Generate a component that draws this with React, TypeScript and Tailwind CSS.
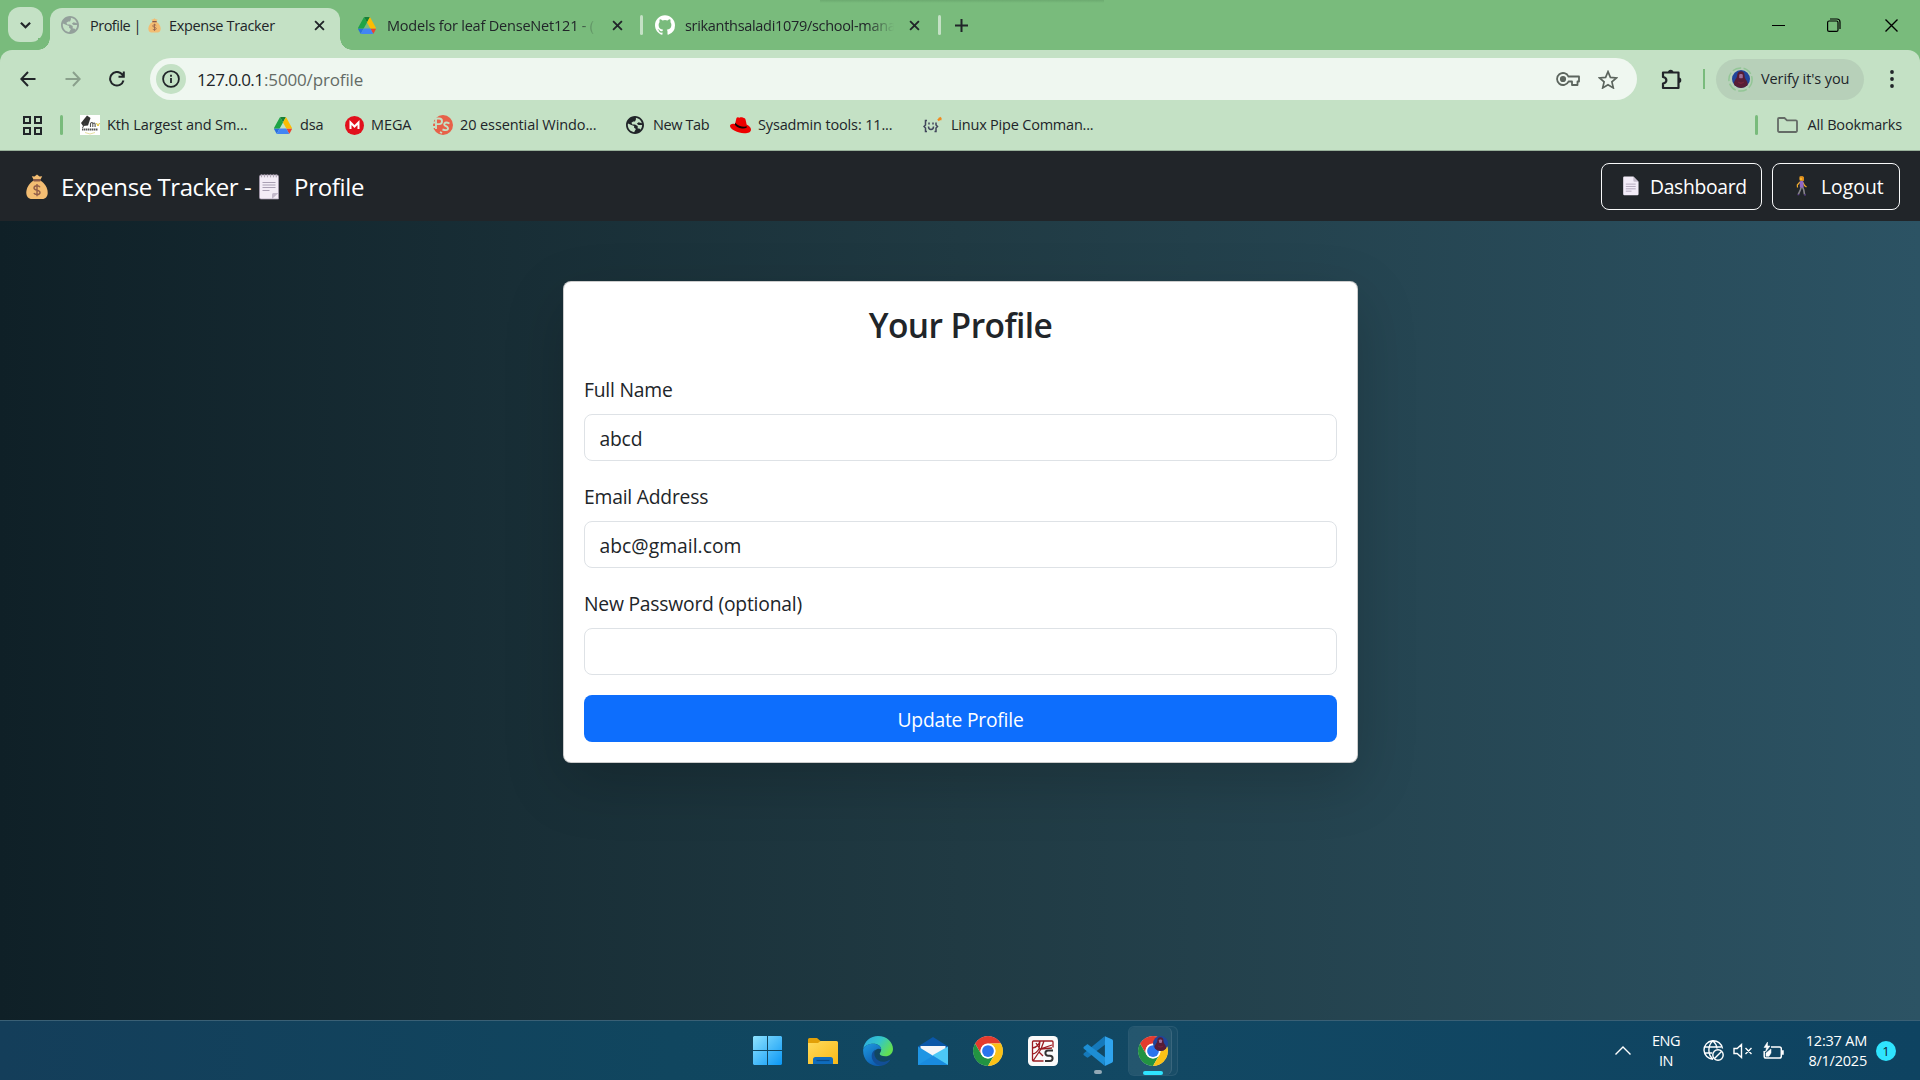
import React from 'react';

type P = { className?: string };

/* ---------- icons ---------- */
const Globe = ({ className }: P) => (
  <svg viewBox="2 2 20 20" className={className} fill="currentColor">
    <path d="M12 2C6.48 2 2 6.48 2 12s4.48 10 10 10 10-4.48 10-10S17.52 2 12 2zm-1 17.93c-3.95-.49-7-3.85-7-7.93 0-.62.08-1.21.21-1.79L8 12l3 1v2l2 1.500-2 3.430zM17.900 17.400c-.26-.81-1-1.400-1.900-1.400h-1v-3l-3-1.600h-3L8 9.500l2-1.500h2l1-2V4.070c3.500.500 5.800 3 6.600 5.900L16 9l-2 1.500 2 1.500h3.900c0 2-.8 4-2 5.400z" />
  </svg>
);
const Bag = ({ className }: P) => (
  <svg viewBox="0 0 22 26" className={className}>
    <path d="M7.500 6.500C3 9.500.3 14 .3 18.500.3 22.500 2.300 25 6 25h10c3.700 0 5.700-2.500 5.700-6.500 0-4.500-2.700-9-7.200-12z" fill="#f3bd72" />
    <path d="M7.500 5.500 5.800 2.200l2.700.4L11 .6l2.500 2 2.700-.4-1.700 3.300z" fill="#f3bd72" />
    <rect x="7" y="5.200" width="8" height="2.200" rx="1.100" fill="#8b5a48" />
    <path d="M14 13.200c-.5-1-1.600-1.500-3-1.500-1.800 0-3 .8-3 2.200 0 3 6 1.500 6 4.500 0 1.300-1.200 2.100-3 2.100-1.600 0-2.600-.5-3.100-1.500M11 10v12.200" fill="none" stroke="#925e49" strokeWidth="1.400" />
  </svg>
);
const Notes = ({ className }: P) => (
  <svg viewBox="0 0 20 27" className={className}>
    <path d="M2 2h16a1.500 1.500 0 0 1 1.500 1.500V26H2A1.500 1.500 0 0 1 .5 24.500v-21A1.500 1.500 0 0 1 2 2z" fill="#f3ecf6" stroke="#a79bb0" strokeWidth=".7" />
    <path d="M2.500 1.300v3M5.500 1.300v3M8.500 1.300v3M11.500 1.300v3M14.500 1.300v3M17.300 1.300v3" stroke="#9a929f" strokeWidth="1.200" strokeDasharray="1.200 .7" />
    <path d="M3.500 9.500h13M3.500 12h13M3.500 14.500h13M3.500 17.500h7" stroke="#aaa0b4" strokeWidth="1.200" />
    <path d="M13 26v-4.500a1.500 1.500 0 0 1 1.500-1.500h5z" fill="#c3b9cb" />
  </svg>
);
const Doc = ({ className }: P) => (
  <svg viewBox="0 0 17 20" className={className}>
    <path d="M1.500 0H11l5.500 5.500v13a1.300 1.300 0 0 1-1.300 1.300H1.500A1.300 1.300 0 0 1 .2 18.500v-17A1.300 1.300 0 0 1 1.500 0z" fill="#f3ecf8" />
    <path d="m11 0 5.500 5.500h-4.200A1.300 1.300 0 0 1 11 4.200z" fill="#c5bccc" />
    <path d="M3 8h10.500M3 10.500h10.500M3 13h10.500M3 15.500h6" stroke="#b2a8bb" strokeWidth="1" />
  </svg>
);
const Walker = ({ className }: P) => (
  <svg viewBox="0 0 12 20" className={className}>
    <path d="M5.300 11 4.300 14l-2 4.300M6.500 11l1.300 3 .7 4.300" stroke="#85838a" strokeWidth="1.600" fill="none" />
    <path d="M1.500 18.700h1.700M8 18.800h2" stroke="#5b3f86" strokeWidth="1.300" />
    <path d="M4 6 1.300 9l.2 2.500M7 6.500 8.500 9.500l2 1.500" stroke="#f2ad28" strokeWidth="1.200" fill="none" />
    <path d="M3.700 5.500c1-1 3-1 3.700 0l.2 6H3.900z" fill="#9068c8" />
    <path d="M3.500 1.500C3.700 0 7.500 0 7.700 1.500v3.200H4.300c-.8 0-1-1.200-.8-3.200z" fill="#fbb32d" />
    <path d="M3.500.5C5 0 7.500 0 7.900 1l.1 3.700-1.700-.2L6 2 3.500 1.500z" fill="#df8e1c" />
  </svg>
);
const Drive = ({ className }: P) => (
  <svg viewBox="0 0 87.3 78" className={className} preserveAspectRatio="none">
    <path d="m6.600 66.850 3.850 6.650c.8 1.400 1.950 2.500 3.300 3.300l13.750-23.800H0c0 1.550.4 3.100 1.200 4.500z" fill="#2a6fe0" />
    <path d="M43.650 25 29.900 1.200c-1.350.8-2.500 1.900-3.300 3.300L1.200 48.500A9 9 0 0 0 0 53h27.500z" fill="#1ea446" />
    <path d="M73.550 76.800c1.350-.8 2.500-1.900 3.300-3.300l1.600-2.750L86.100 57.500c.8-1.400 1.200-2.950 1.200-4.500H59.800l5.850 11.500z" fill="#ea4335" />
    <path d="M43.650 25 57.400 1.200C56.050.4 54.500 0 52.900 0H34.400c-1.600 0-3.150.45-4.500 1.200z" fill="#188038" />
    <path d="M59.800 53H27.500L13.750 76.800c1.350.8 2.900 1.200 4.500 1.200h50.800c1.600 0 3.150-.45 4.500-1.200z" fill="#4285f4" />
    <path d="m73.400 26.500-12.700-22c-.8-1.400-1.950-2.500-3.300-3.300L43.650 25 59.800 53h27.450c0-1.550-.4-3.100-1.200-4.500z" fill="#fbbc04" />
  </svg>
);
const Github = ({ className }: P) => (
  <svg viewBox="0 0 24 24" className={className} fill="currentColor">
    <path d="M12 .3C5.370.3 0 5.670 0 12.300c0 5.300 3.440 9.800 8.200 11.390.6.110.82-.26.82-.58v-2.040c-3.340.73-4.040-1.610-4.040-1.610-.55-1.390-1.330-1.760-1.330-1.760-1.090-.74.080-.73.080-.73 1.200.09 1.840 1.240 1.840 1.240 1.070 1.830 2.810 1.300 3.490 1 .11-.78.42-1.310.76-1.610-2.660-.3-5.470-1.330-5.470-5.930 0-1.310.47-2.380 1.240-3.220-.13-.3-.54-1.520.11-3.180 0 0 1.010-.32 3.300 1.230a11.500 11.500 0 0 1 6 0c2.290-1.550 3.300-1.230 3.300-1.230.65 1.660.24 2.880.12 3.180.77.84 1.230 1.910 1.230 3.220 0 4.610-2.810 5.620-5.480 5.920.43.37.82 1.100.82 2.220v3.290c0 .32.21.7.82.58A12 12 0 0 0 24 12.300C24 5.670 18.630.3 12 .3z" />
  </svg>
);
const Cross = ({ className, w = 2 }: P & { w?: number }) => (
  <svg viewBox="0 0 12 12" className={className} fill="none" stroke="currentColor" strokeWidth={w}>
    <path d="m1.200 1.200 9.600 9.600M10.800 1.200 1.200 10.800" />
  </svg>
);
const Chrome = ({ className }: P) => (
  <svg viewBox="0 0 48 48" className={className}>
    <circle cx="24" cy="24" r="23.500" fill="#fff" />
    <path d="M3.220 12A24 24 0 0 1 44.780 12H24a12 12 0 0 0-10.400 18z" fill="#e33b2e" />
    <path d="M3.220 12A24 24 0 0 0 24 48l10.390-18A12 12 0 0 1 13.600 30z" fill="#229342" />
    <path d="M44.780 12A24 24 0 0 1 24 48l10.390-18A12 12 0 0 0 24 12z" fill="#fbc116" />
    <circle cx="24" cy="24" r="11.800" fill="#fff" />
    <circle cx="24" cy="24" r="9.400" fill="#2a74ee" />
  </svg>
);
const Avatar = ({ className }: P) => (
  <svg viewBox="0 0 20 20" className={className}>
    <defs><clipPath id="av"><circle cx="10" cy="10" r="10" /></clipPath></defs>
    <g clipPath="url(#av)">
      <path d="M0 0h20v20H0z" fill="#20459b" />
      <path d="M10 1.500c-3 0-4.300 2-4.300 5 0 2-1.700 3.500-3 6-.8 2-1 5-1 7.500h16c0-3-.2-6-1.400-8-1.400-2-2.300-3.500-2.300-5.500 0-3-1.200-5-4-5z" fill="#571d36" />
      <path d="M8 5.500c0-1.300 4-1.300 4 0v2.800c0 1.300-4 1.300-4 0z" fill="#9c6e97" />
      <path d="M7 13.500c2 1.500 4 1.500 6 0" stroke="#8b2942" fill="none" />
    </g>
  </svg>
);

/* ---------- browser chrome ---------- */
const Sep = ({ className = '' }: P) => <div className={`w-[3px] h-5 rounded-full shrink-0 ${className}`} />;

const TabStrip = () => (
  <div className="relative flex h-[50px] items-center bg-[#79bb7c]">
    <div className="absolute top-0 left-[820px] h-[3px] w-[284px] bg-gradient-to-b from-[#6caa70] to-[#79bb7c]" />
    <div className="ml-2 mb-[1px] flex size-[35px] items-center justify-center rounded-[12px] bg-[#c4e1c5]">
      <svg viewBox="0 0 12 8" className="h-[8px] w-[11px]" fill="none" stroke="currentColor" strokeWidth="2.400"><path d="m1 1.500 5 5 5-5" /></svg>
    </div>
    <div className="relative ml-[7px] mt-2 flex h-[42px] w-[290px] items-center rounded-t-[12px] bg-[#c4e1c5] pb-2 pl-[11px]">
      <div className="absolute bottom-0 -left-3 size-3 bg-[radial-gradient(circle_at_0_0,#79bb7c_11.500px,#c4e1c5_12px)]" />
      <div className="absolute bottom-0 -right-3 size-3 bg-[radial-gradient(circle_at_100%_0,#79bb7c_11.500px,#c4e1c5_12px)]" />
      <Globe className="size-[18px] text-[#93a09b]" />
      <span className="ml-[11px] w-[58px] pt-px tracking-[-0.500px]">Profile |</span>
      <Bag className="h-[15px] w-[13px]" />
      <span className="ml-2 w-[145px] pt-px tracking-[-0.350px]">Expense Tracker</span>
      <Cross className="size-[11px]" />
    </div>
    <Drive className="ml-[18px] h-[17px] w-[18px]" />
    <span className="ml-[11px] w-[212px] pt-px tracking-[-0.200px] [mask-image:linear-gradient(to_right,black_190px,transparent_209px)]">Models for leaf DenseNet121 - (</span>
    <Cross className="ml-[13px] size-[11px]" />
    <Sep className="ml-[17px] bg-[#c4e1c5]" />
    <Github className="ml-[12px] size-[20px] text-white" />
    <span className="ml-[10px] w-[209px] pt-px tracking-[-0.310px] [mask-image:linear-gradient(to_right,black_182px,transparent)]">srikanthsaladi1079/school-mana</span>
    <Cross className="ml-[15px] size-[11px]" />
    <Sep className="ml-[18px] bg-[#c4e1c5]" />
    <svg viewBox="0 0 13 13" className="ml-[14px] size-[13px]" stroke="currentColor" strokeWidth="2"><path d="M6.500 0v13M0 6.500h13" /></svg>
    <div className="ml-auto flex items-center text-black">
      <div className="h-px w-[13px] bg-black" />
      <svg viewBox="0 0 14 14" className="ml-[42px] size-[14px]" fill="none" stroke="currentColor" strokeWidth="1.200"><rect x=".6" y="3" width="10.400" height="10.400" rx="1.500" /><path d="M3 1h7a3 3 0 0 1 3 3v7" /></svg>
      <Cross w={1.100} className="mr-[21px] ml-[43px] size-[15px]" />
    </div>
  </div>
);

const Toolbar = () => (
  <div className="flex h-[50px] items-center rounded-t-[12px] bg-[#c4e1c5] pt-2">
    <svg viewBox="0 0 16 16" className="ml-[20px] size-[16px]" fill="none" stroke="currentColor" strokeWidth="2"><path d="M15.500 8H1.500M8 1 1.300 8 8 15" /></svg>
    <svg viewBox="0 0 16 16" className="ml-[29px] size-[16px] text-[#8aa08c]" fill="none" stroke="currentColor" strokeWidth="2"><path d="M.5 8h14M8 1l6.700 7L8 15" /></svg>
    <svg viewBox="0 0 16 16" className="ml-[28px] size-[16px]" fill="none" stroke="currentColor" strokeWidth="2"><path d="M14.500 9.500A6.800 6.800 0 1 1 12.800 3L14.500 5M14.800.5v5.200H9.500" /></svg>
    <div className="ml-[25px] flex h-[42px] w-[1487px] items-center rounded-full bg-[#eff7f0] text-[17px]">
      <div className="ml-[6px] flex size-[30px] items-center justify-center rounded-full bg-[#c4e1c5]">
        <svg viewBox="0 0 18 18" className="size-[18px]" fill="none" stroke="currentColor" strokeWidth="1.800"><circle cx="9" cy="9" r="7.900" /><path d="M9 8v5M9 4.800v1.900" /></svg>
      </div>
      <span className="ml-[11px] w-[67px] pt-px tracking-[-0.600px]">127.0.0.1</span>
      <span className="pt-px tracking-[-0.150px] text-[#646b66]">:5000/profile</span>
      <svg viewBox="0 0 24 14" className="ml-auto h-[14px] w-[24px] text-[#5c655e]" fill="none" stroke="currentColor" strokeWidth="1.800"><path d="M12.500 4.500A6 6 0 1 0 12.500 9.500H16V13h5.500V9.500H23v-5z" strokeLinejoin="round" /><circle cx="7" cy="7" r="2.200" fill="currentColor" /></svg>
      <svg viewBox="0 0 20 19" className="mr-[19px] ml-[18px] h-[19px] w-[20px] text-[#5c655e]" fill="none" stroke="currentColor" strokeWidth="1.700"><path d="m10 1.700 2.400 5.700 6.100.5-4.600 4 1.400 6L10 14.700l-5.300 3.200 1.400-6-4.600-4 6.100-.5z" /></svg>
    </div>
    <svg viewBox="0 0 21 21" className="ml-[24px] size-[21px]" fill="none" stroke="currentColor" strokeWidth="2.200"><path d="M2 3.500h15.500v15.500H2v-4.500c4.500-.8 4.500-5.700 0-6.500z" strokeLinejoin="round" /><path d="M7 3.200a2.700 2.500 0 0 1 5.400 0M17.800 8.500a2.500 2.700 0 0 1 0 5.400" fill="currentColor" stroke="none" /></svg>
    <div className="ml-[21px] h-5 w-[2px] bg-[#79bb7c]" />
    <div className="ml-[11px] flex h-[41px] w-[148px] items-center rounded-full bg-[#b7d0b9]">
      <div className="relative ml-[12px] flex size-[25px] items-center justify-center">
        <svg viewBox="0 0 25 25" className="absolute inset-0" fill="none" stroke="#93c696" strokeWidth="1.500" strokeDasharray="9 2.500"><circle cx="12.500" cy="12.500" r="11.600" /></svg>
        <Avatar className="size-[18px]" />
      </div>
      <span className="ml-[8px] tracking-[-0.100px]">Verify it's you</span>
    </div>
    <svg viewBox="0 0 4 18" className="ml-[26px] h-[18px] w-[4px]" fill="currentColor"><circle cx="2" cy="2" r="1.900" /><circle cx="2" cy="9" r="1.900" /><circle cx="2" cy="16" r="1.900" /></svg>
  </div>
);

const Bookmarks = () => (
  <div className="flex h-[51px] items-center border-b border-[#98b09a] bg-[#c4e1c5]">
    <svg viewBox="0 0 19 19" className="ml-[23px] size-[19px]" fill="none" stroke="currentColor" strokeWidth="2"><path d="M1 1h6v6H1zM12 1h6v6h-6zM1 12h6v6H1zM12 12h6v6h-6z" /></svg>
    <Sep className="ml-[18px] bg-[#79bb7c]" />
    <svg viewBox="0 0 20 20" className="ml-[17px] size-[20px]">
      <path d="M0 0h20v20H0z" fill="#fff" /><path d="M1 8 7 .5l3.500 2.500L8 10.500 3 11z" fill="#333" /><path d="M5 8 2.500 13" stroke="#444" />
      <path d="M10.500 12V8.500q1.500-2 2.300 0V12M12.800 9q1.500-2 2.300 0v3" stroke="#555" fill="none" strokeWidth="1.100" /><path d="m16.500 8 1.500 3 1.500-3" stroke="#e0c22c" fill="none" /><path d="M2 14.500h16" stroke="#555" strokeWidth="1.800" strokeDasharray="1.500 .5" /><path d="M5 17.500q5 3 10 0" stroke="#e8dfa0" fill="none" />
    </svg>
    <span className="ml-[7px] w-[167px] tracking-[-0.100px]">Kth Largest and Sm...</span>
    <Drive className="h-[17px] w-[18px]" />
    <span className="ml-[8px] w-[45px] tracking-[-0.200px]">dsa</span>
    <svg viewBox="0 0 19 19" className="size-[19px]"><circle cx="9.500" cy="9.500" r="9.500" fill="#e1101c" /><path d="M5.500 13V6.500l4 4 4-4V13" stroke="#fff" strokeWidth="2" fill="none" /></svg>
    <span className="ml-[7px] w-[62px] tracking-[-0.100px]">MEGA</span>
    <svg viewBox="0 0 20 20" className="size-[20px]"><circle cx="10" cy="10" r="10" fill="#e76149" /><path d="M0 7.500h2M0 12h2M3 14V3.500h3.200a2.800 2.800 0 0 1 0 5.600H3.500M16.500 8.500c-5-2.500-7 1.200-3.500 2.700s2.500 5.300-3.500 3.300M7 17l2 1" stroke="#c4e1c5" strokeWidth="1.900" fill="none" /></svg>
    <span className="ml-[7px] w-[166px] tracking-[-0.100px]">20 essential Windo...</span>
    <Globe className="size-[18px]" />
    <span className="ml-[9px] w-[77px] tracking-[-0.400px]">New Tab</span>
    <svg viewBox="0 0 21 17" className="h-[17px] w-[21px]"><path d="M5 7 6.500 1c.5-1.200 2-1 3-.3 1.500-1 4-.2 5.500.8.800 1 1.200 4 1.600 6 2.500 1 4.400 3 4.400 5 0 3-3.500 4-7 3.800C8 16 0 12.500 0 9c0-1.800 2-2.800 5-2z" fill="#e00" /><path d="M4.800 7.500c2 3.500 8.700 5.200 11.800 3.300l.2-1.500c-3 1.300-9-.2-11.500-3.600z" fill="#160506" /></svg>
    <span className="ml-[7px] w-[165px]">Sysadmin tools: 11...</span>
    <svg viewBox="0 0 20 18" className="h-[18px] w-[20px]" fill="none" stroke="#41465c" strokeWidth="1.500"><path d="M4 4.500H2.500V9L1 10.500 2.500 12v3.500H4M13 6.500V9l1.500 1.500L13 12v3.500h-1.500M5.500 10.500c0 4 5 4 5 0M6 6.500v2M10 6.500v2" /><path d="m15 4.500 3-3M15.500 3h3" stroke="#f18a1d" strokeWidth="2.300" /></svg>
    <span className="ml-[8px] tracking-[-0.210px]">Linux Pipe Comman...</span>
    <Sep className="ml-auto bg-[#79bb7c]" />
    <svg viewBox="0 0 21 16" className="ml-[19px] h-[16px] w-[21px] text-[#646b66]" fill="none" stroke="currentColor" strokeWidth="1.800"><path d="M1 13.800V2a1 1 0 0 1 1-1h5.500l2.500 2.300h8.800a1.200 1.200 0 0 1 1.200 1.200v9.300a1.200 1.200 0 0 1-1.200 1.200H2.200A1.200 1.200 0 0 1 1 13.800z" /></svg>
    <span className="mr-[18px] ml-[10px] tracking-[-0.170px]">All Bookmarks</span>
  </div>
);

/* ---------- page ---------- */
const Field = ({ label, value, cls = '' }: { label: string; value: string; cls?: string }) => (
  <div className="mb-[20px]">
    <div className="mb-[10px] h-[30px] leading-[31px] tracking-[-0.210px]">{label}</div>
    <div className={`h-[47px] rounded-[8px] border border-[#dee2e6] px-[14.500px] leading-[48px] ${cls}`}>{value}</div>
  </div>
);

const Page = () => (
  <main className="flex h-[869px] flex-col bg-[linear-gradient(to_right,#0f2027,#203a43,#2c5364)]">
    <header className="flex h-[70px] shrink-0 items-center bg-[#212529] text-white">
      <Bag className="mt-[2px] ml-[26px] h-[26px] w-[22px]" />
      <span className="ml-[13px] w-[198px] pt-[2px] text-[24px] leading-none tracking-[-0.430px]">Expense Tracker -</span>
      <Notes className="mt-px h-[27px] w-[20px]" />
      <span className="ml-[15px] pt-[2px] text-[24px] leading-none tracking-[-0.300px]">Profile</span>
      <a className="ml-auto flex h-[47px] w-[161px] items-center rounded-[8px] border border-[#f8f9fa] text-[19.300px]">
        <Doc className="ml-[21px] h-[20px] w-[16px]" />
        <span className="ml-[11px] pt-[2px] tracking-[-0.300px]">Dashboard</span>
      </a>
      <a className="mr-[20px] ml-[10px] flex h-[47px] w-[128px] items-center rounded-[8px] border border-[#f8f9fa] text-[19.300px]">
        <Walker className="ml-[23px] h-[20px] w-[12px]" />
        <span className="ml-[13px] pt-[2px] tracking-[0.050px]">Logout</span>
      </a>
    </header>
    <section className="ml-[563px] mt-[60px] w-[795px] rounded-[8px] border border-black/20 bg-white px-[20px] py-[20px] text-[19.300px] shadow-[0_20px_60px_rgba(0,0,0,0.175)]">
      <h2 className="mb-[30px] h-[42px] text-center text-[33.500px] leading-[46px] font-semibold tracking-[-0.550px]">Your Profile</h2>
      <Field label="Full Name" value="abcd" cls="tracking-[-0.200px]" />
      <Field label="Email Address" value="abc@gmail.com" cls="tracking-[0.030px]" />
      <Field label="New Password (optional)" value="" />
      <button className="block h-[47px] w-full rounded-[8px] bg-[#0d6efd] pt-[2px] text-white tracking-[-0.230px]">Update Profile</button>
    </section>
  </main>
);

/* ---------- taskbar ---------- */
const Taskbar = () => (
  <footer className="flex h-[60px] items-center border-t border-[#3a6075] bg-[linear-gradient(to_right,#143e5a,#10465f_35%,#124863_60%,#0e4361)] text-white">
    <svg viewBox="0 0 29 29" className="ml-[753px] size-[29px]">
      <defs><linearGradient id="win" x1="0" y1="0" x2="29" y2="29" gradientUnits="userSpaceOnUse"><stop stopColor="#8ee3ff" /><stop offset="1" stopColor="#0a97f5" /></linearGradient></defs>
      <path d="M1 0h13v14H0V1zM15 0h13l1 1v13H15zM0 15h14v14H1l-1-1zM15 15h14v13l-1 1H15z" fill="url(#win)" />
    </svg>
    <svg viewBox="0 0 30 26" className="ml-[26px] h-[26px] w-[30px]">
      <defs><linearGradient id="fol" x1="0" y1="0" x2="1" y2="1"><stop stopColor="#ffdb5c" /><stop offset="1" stopColor="#f9b917" /></linearGradient></defs>
      <path d="M0 1.500A1.500 1.500 0 0 1 1.500 0H9l3.500 3v4H0z" fill="#e2a008" /><path d="M0 5h10l2.500-2H28.500A1.500 1.500 0 0 1 30 4.500V26H0z" fill="url(#fol)" />
      <path d="M5 26v-4.500A2.500 2.500 0 0 1 7.500 19h15a2.500 2.500 0 0 1 2.500 2.500V26z" fill="#0f6cbd" /><path d="M8.500 22.500h13" stroke="#0a4a86" strokeWidth="1.200" />
    </svg>
    <svg viewBox="0 0 30 30" className="ml-[25px] size-[30px]">
      <defs>
        <linearGradient id="e1" x1="0" y1="0" x2="1" y2=".5"><stop stopColor="#2aa7e6" /><stop offset=".55" stopColor="#34c6c8" /><stop offset="1" stopColor="#62de52" /></linearGradient>
        <linearGradient id="e2" x1="0" y1="0" x2=".6" y2="1"><stop stopColor="#1f9ae0" /><stop offset="1" stopColor="#0d5cb0" /></linearGradient>
      </defs>
      <path d="M.3 12.500C1.500 5.200 7.500 0 15 0c9 0 15 6.300 15 13 0 4.500-3.500 7.300-7.500 7.300-3.800 0-5.800-1.300-5.800-2.600 0-.8 1.500-1.700 1.500-4.200 0-3.500-3.400-5.800-7.700-5.800C6 7.700 2 9.500.3 12.500z" fill="url(#e1)" />
      <path d="M.2 13C1.800 9.500 6 7.700 10.200 7.700c4.300 0 8 2.300 8 5.800-3-2-8 .5-8 5.500 0 5 3.800 9.500 8.800 10.500C8 32-.8 24 .2 13z" fill="url(#e2)" />
      <path d="M12.200 13.500c-2.700 5.500 1 13 9.300 12.200 2.300-.2 4.500-1.500 6-2.200-2 3.500-5.300 5.700-9 6.300C9 29 5.500 18 12.200 13.500z" fill="#124f96" />
    </svg>
    <svg viewBox="0 0 30 28" className="ml-[25px] h-[28px] w-[30px]">
      <path d="M0 9.500 15 0l15 9.500V12H0z" fill="#0a57a8" /><path d="M2.500 9h25v9l-12.500 5L2.500 18z" fill="#f3f6f9" />
      <path d="M30 9.500V28H15V18z" fill="#4cc8f6" /><path d="M0 9.500 30 28H0z" fill="#1f95e4" />
      <path d="M15 18.700 30 28H0z" fill="#1585dc" opacity=".6" />
    </svg>
    <Chrome className="ml-[25px] size-[30px]" />
    <svg viewBox="0 0 30 30" className="ml-[25px] size-[30px]">
      <rect width="30" height="30" rx="4.500" fill="#fafafa" />
      <path d="M15.500 25H5.500a1 1 0 0 1-1-1V6a1 1 0 0 1 1-1H24a1 1 0 0 1 1 1v5.500M4.500 12c4-.5 6.500-3 7.500-7M4.500 18c3-.5 5-2.500 6.500-5L12 5M5 25l8-12 3-8M8 7l4 6 12-4M13 13l11-1M11 16l4 4" stroke="#9c1c22" strokeWidth="1.300" fill="none" />
      <path d="M25 14.500h-5a2.600 2.600 0 0 0 0 5.200h2a2.600 2.600 0 0 1 0 5.200h-5" stroke="#333" strokeWidth="2" fill="none" />
    </svg>
    <div className="relative ml-[25px] size-[30px]">
      <svg viewBox="0 0 100 100" className="size-[30px]">
        <path d="M74 28 18 71c-2 1.500-4 1.500-6 0l-9-7c-2-1.500-2-4.500 0-6.500L72 1z" fill="#1579ba" />
        <path d="M74 72 18 29c-2-1.500-4-1.500-6 0l-9 7c-2 1.500-2 4.500 0 6.500L72 99z" fill="#1d8ed4" />
        <path d="m73 1 23 10c2.500 1 4 3.500 4 6v66c0 2.500-1.500 5-4 6L73 100c-1 0 0 0 0-3z" fill="#2fa4ee" />
      </svg>
      <div className="absolute top-[34px] left-[11px] h-[4px] w-[8px] rounded-full bg-[#93a9b6]" />
    </div>
    <div className="relative ml-[15px] flex h-[50px] w-[50px] items-center rounded-[6px] border border-white/[0.07] bg-white/[0.03]">
      <div className="absolute inset-y-0 left-0 w-[43px] rounded-[6px] border-r border-white/10 bg-white/5" />
      <Chrome className="relative ml-[9px] size-[30px]" />
      <Avatar className="absolute top-[9px] left-[24px] size-[15px]" />
      <div className="absolute top-[44px] left-[14px] h-[4px] w-[20px] rounded-full bg-[#2fe4ff]" />
    </div>
    <svg viewBox="0 0 16 9" className="ml-auto h-[9px] w-[16px]" fill="none" stroke="currentColor" strokeWidth="1.400"><path d="m.5 8.500 7.500-7.500 7.500 7.500" /></svg>
    <div className="ml-[19px] w-[32px] text-center leading-[20px] tracking-[-0.500px]">ENG<br />IN</div>
    <svg viewBox="0 0 21 21" className="ml-[21px] size-[21px]" fill="none" stroke="currentColor" strokeWidth="1.400"><path d="M19.500 8.500A9.300 9.300 0 1 0 10 19.300M1.200 7h17M1.200 13h8M10 1c-5.500 4-5.500 14 0 18M10 1c2.300 2 3.800 4.500 4 7.500" /><circle cx="15" cy="15" r="5.200" /><path d="m11.500 18.500 7-7" /></svg>
    <svg viewBox="0 0 20 16" className="ml-[9px] h-[16px] w-[20px]" fill="none" stroke="currentColor" strokeWidth="1.400"><path d="M1 5.500v5h3.200l4.300 4V1.500l-4.300 4zM12.500 5l6 6M18.500 5l-6 6" /></svg>
    <svg viewBox="0 0 21 18" className="ml-[10px] h-[18px] w-[21px]" fill="none" stroke="currentColor" strokeWidth="1.500"><path d="M8 5h8.500A1.800 1.800 0 0 1 18.300 6.800v7.400a1.800 1.800 0 0 1-1.800 1.800H3A1.800 1.800 0 0 1 1.200 14.200V9" /><path d="M18.500 8.500h2v4h-2M3 14.300V11l5-4v4l-2 3.300zM4.500 0 1 5.500h2.500L2.500 10 7 4H4.500z" fill="currentColor" strokeWidth=".5" /></svg>
    <div className="ml-[17px] w-[66px] text-right leading-[20px] tracking-[-0.220px]">12:37 AM<br />8/1/2025</div>
    <div className="mr-[24px] ml-[9px] flex size-[20px] items-center justify-center rounded-full bg-[#2fe4ff] text-[13px] text-[#123]">1</div>
  </footer>
);

export default function App() {
  return (
    <div className="h-[1080px] w-[1920px] overflow-hidden bg-[#79bb7c] font-['Open_Sans',sans-serif] text-[14.500px] leading-[20px] whitespace-nowrap text-[#212529] tracking-[-0.150px] [&_svg]:shrink-0 [&_span]:shrink-0">
      <TabStrip />
      <Toolbar />
      <Bookmarks />
      <Page />
      <Taskbar />
    </div>
  );
}
